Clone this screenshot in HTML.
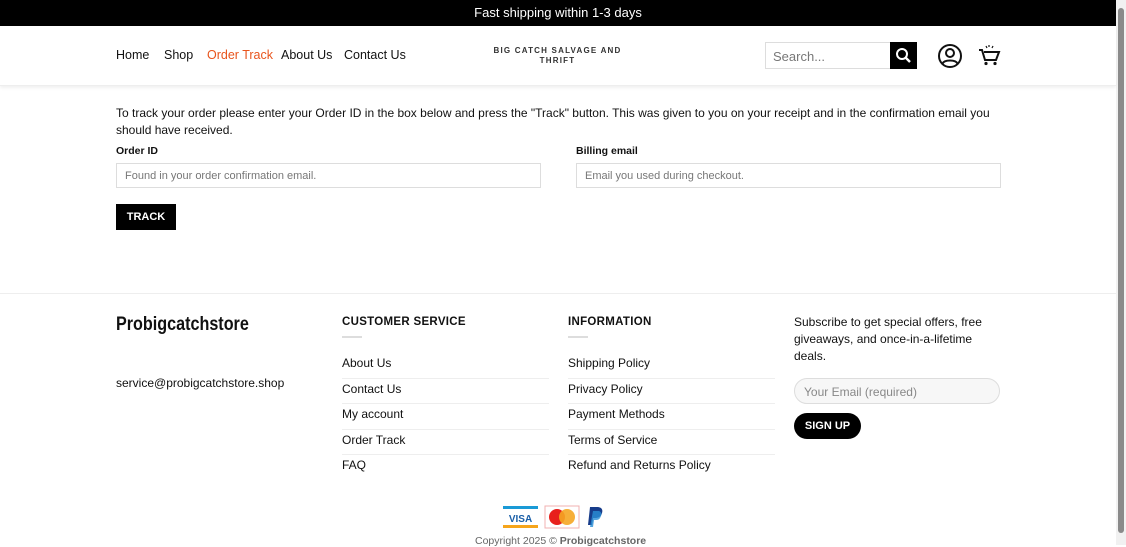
<!DOCTYPE html>
<html><head><meta charset="utf-8"><style>
*{box-sizing:border-box;margin:0;padding:0}
body{width:1126px;height:545px;overflow:hidden;font-family:"Liberation Sans",sans-serif;color:#111;background:#fff;position:relative}
.top{height:26px;background:#000;color:#fff;font-size:13px;text-align:center;line-height:26px;width:1116px}
.sb{position:absolute;right:0;top:0;width:10px;height:545px;background:#f1f1f1}
.sb div{position:absolute;left:2px;top:8px;width:6px;height:525px;background:#8a8a8a;border-radius:3px}
.hdr{position:relative;height:60px;width:1116px;box-shadow:0 2px 3px rgba(0,0,0,.06);border-bottom:1px solid #eee}
.nav span{position:absolute;top:22px;font-size:12.5px;white-space:nowrap}
.logo{position:absolute;left:490px;top:20px;width:135px;text-align:center;font-size:8px;font-weight:bold;letter-spacing:1.2px;color:#333;line-height:10px}
.search{position:absolute;left:765px;top:16px;width:126px;height:27px;border:1px solid #ddd;font-size:13px;color:#777;padding:6px 7px}
.sbtn{position:absolute;left:890px;top:16px;width:27px;height:27px;background:#000}
p.msg{position:absolute;left:116px;top:105px;width:880px;font-size:12px;line-height:17px}
.lbl{position:absolute;font-size:10.5px;font-weight:bold;top:145px}
.inp{position:absolute;top:163px;width:425px;height:25px;border:1px solid #ddd;font-size:11px;color:#777;padding:6px 8px}
.track{position:absolute;left:116px;top:204px;width:60px;height:26px;background:#000;color:#fff;font-size:11px;font-weight:bold;text-align:center;line-height:26px}
.fline{position:absolute;top:293px;left:0;width:1116px;border-top:1px solid #eee}
.brand{position:absolute;left:116px;top:314px;font-family:"Liberation Sans Narrow","Liberation Sans",sans-serif;font-weight:bold;font-size:19px;transform:scaleX(.85);transform-origin:left}
.mail{position:absolute;left:116px;top:376px;font-size:12px}
.col{position:absolute;top:316px;width:207px;font-size:12px}
.col h4{font-size:11.5px;font-weight:bold;letter-spacing:.3px;height:20px}
.col .bar{width:20px;border-top:2px solid #ddd;margin-bottom:15px}
.col div.i{height:25.5px;border-bottom:1px solid #eee;padding-top:3px}
.col div.i:last-child{border:none}
.sub{position:absolute;left:794px;top:314px;width:200px;font-size:12px;line-height:17px}
.email{position:absolute;left:794px;top:378px;width:206px;height:26px;border:1px solid #ddd;border-radius:13px;background:#f7f7f7;font-size:12px;color:#888;padding:6px 9px}
.sign{position:absolute;left:794px;top:413px;width:67px;height:26px;border-radius:13px;background:#000;color:#fff;font-size:11px;font-weight:bold;text-align:center;line-height:26px}
.copy{position:absolute;left:475px;top:535px;font-size:10.5px;color:#666}
</style></head><body>
<div class="top">Fast shipping within 1-3 days</div>
<div class="sb"><div></div></div>
<div class="hdr">
<div class="nav"><span style="left:116px">Home</span><span style="left:164px">Shop</span><span style="left:207px;color:#e8541c">Order Track</span><span style="left:281px">About Us</span><span style="left:344px">Contact Us</span></div>
<div class="logo">BIG CATCH SALVAGE AND THRIFT</div>
<div class="search">Search...</div>
<div class="sbtn"><svg width="27" height="27"><circle cx="12" cy="12" r="5" stroke="#fff" stroke-width="2" fill="none"/><line x1="16" y1="16" x2="20" y2="20" stroke="#fff" stroke-width="2.4"/></svg></div>
<svg style="position:absolute;left:937px;top:17px" width="26" height="26"><circle cx="13" cy="13" r="11" stroke="#111" stroke-width="2" fill="none"/><circle cx="13" cy="10" r="4" stroke="#111" stroke-width="2" fill="none"/><path d="M5.5 20.5c2-4 13-4 15 0" stroke="#111" stroke-width="2" fill="none"/></svg>
<svg style="position:absolute;left:978px;top:17px" width="24" height="24"><path d="M1 7h3l3 10h11l3-8H6" stroke="#111" stroke-width="2" fill="none"/><circle cx="8" cy="20.5" r="1.6" fill="#111"/><circle cx="17" cy="20.5" r="1.6" fill="#111"/><path d="M11 2v2M15 3l-1 2M8 3l1 2" stroke="#111" stroke-width="1.2"/></svg>
</div>
<p class="msg">To track your order please enter your Order ID in the box below and press the "Track" button. This was given to you on your receipt and in the confirmation email you should have received.</p>
<div class="lbl" style="left:116px">Order ID</div>
<div class="lbl" style="left:576px">Billing email</div>
<div class="inp" style="left:116px">Found in your order confirmation email.</div>
<div class="inp" style="left:576px">Email you used during checkout.</div>
<div class="track">TRACK</div>
<div class="fline"></div>
<div class="brand">Probigcatchstore</div>
<div class="mail">service@probigcatchstore.shop</div>
<div class="col" style="left:342px"><h4>CUSTOMER SERVICE</h4><div class="bar"></div><div class="i">About Us</div><div class="i">Contact Us</div><div class="i">My account</div><div class="i">Order Track</div><div class="i">FAQ</div></div>
<div class="col" style="left:568px"><h4>INFORMATION</h4><div class="bar"></div><div class="i">Shipping Policy</div><div class="i">Privacy Policy</div><div class="i">Payment Methods</div><div class="i">Terms of Service</div><div class="i">Refund and Returns Policy</div></div>
<div class="sub">Subscribe to get special offers, free giveaways, and once-in-a-lifetime deals.</div>
<div class="email">Your Email (required)</div>
<div class="sign">SIGN UP</div>
<svg style="position:absolute;left:502px;top:505px" width="110" height="24">
<rect x="1" y="1" width="35" height="22" fill="#fff"/><rect x="1" y="1" width="35" height="3" fill="#1a9ad6"/><rect x="1" y="20" width="35" height="3" fill="#f6a51b"/><text x="18.5" y="17" font-size="10" font-weight="bold" fill="#1a5fa8" text-anchor="middle" font-family="Liberation Sans">VISA</text>
<rect x="43" y="1" width="34" height="22" fill="#fff" stroke="#f2b0b0"/><circle cx="55" cy="12" r="8" fill="#e8201c"/><circle cx="65" cy="12" r="8" fill="#f5a623" opacity=".9"/>
<path d="M88 2h7c5 0 6 3 5 6-1 4-4 5-7 5h-2l-1 7h-4z" fill="#173c8a"/><path d="M91 6h6c3 1 3 4 1 7-1 2-3 2-5 2h-1l-1 7h-3z" fill="#2a8fd6" opacity=".8"/>
</svg>
<div class="copy">Copyright 2025 © <b>Probigcatchstore</b></div>
</body></html>
